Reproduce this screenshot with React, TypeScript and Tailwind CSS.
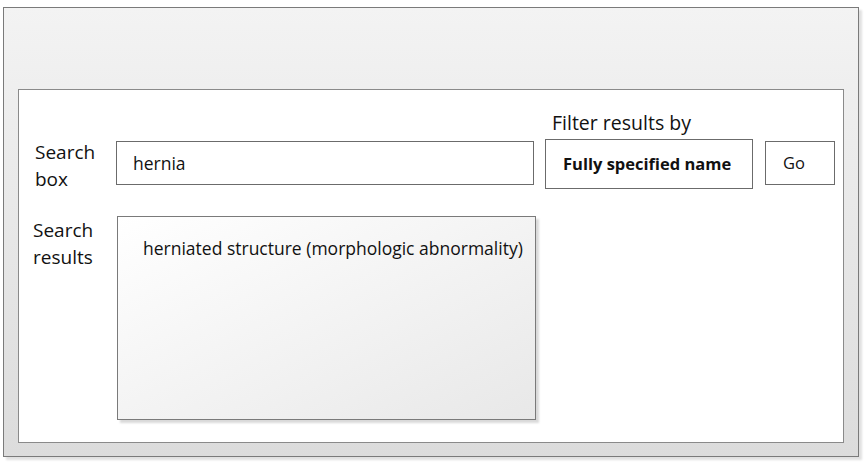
export default function App() {
  const font = { fontFamily: "'Open Sans', Lato, sans-serif" };
  return (
    <div className="w-[865px] h-[471px] bg-white pt-[7px] pl-[3px]" style={font}>
      <div className="w-[856px] h-[450px] border border-[#7a7a7a] bg-gradient-to-b from-[#f3f3f3] to-[#dcdcdc] shadow-[3px_3px_2px_rgba(0,0,0,0.12)] pt-[81px] pl-[14px]">
        <div className="w-[826px] h-[354px] bg-white border border-[#8a8a8a] pt-[19px] text-[#111]">
          <div className="flex items-start h-[80px]">
            <div className="ml-[16px] w-[81px] mt-[30px] text-[19px] leading-[27px]">
              Search<br />box
            </div>
            <div className="mt-[32px] w-[418px] h-[44px] border border-[#6b6b6b] flex items-center pl-[16px] text-[17.5px]">
              hernia
            </div>
            <div className="ml-[11px] flex flex-col">
              <div className="h-[30px] pl-[7px] pt-[1px] text-[19.5px] leading-[26px]">Filter results by</div>
              <div className="w-[208px] h-[50px] border border-[#6b6b6b] flex items-center pl-[17px] text-[16.5px] font-bold">
                Fully specified name
              </div>
            </div>
            <div className="ml-[12px] mt-[32px] w-[70px] h-[44px] border border-[#6b6b6b] flex items-center pl-[17px] text-[16.5px]">
              Go
            </div>
          </div>
          <div className="flex items-start mt-[27px]">
            <div className="ml-[14px] w-[84px] mt-[1px] text-[19px] leading-[27px]">
              Search<br />results
            </div>
            <div className="w-[419px] h-[204px] border border-[#7a7a7a] bg-gradient-to-br from-white to-[#e8e8e8] shadow-[3px_3px_2px_rgba(0,0,0,0.15)] pl-[25px] pt-[18px] text-[17.5px]">
              herniated structure (morphologic abnormality)
            </div>
          </div>
        </div>
      </div>
    </div>
  );
}
